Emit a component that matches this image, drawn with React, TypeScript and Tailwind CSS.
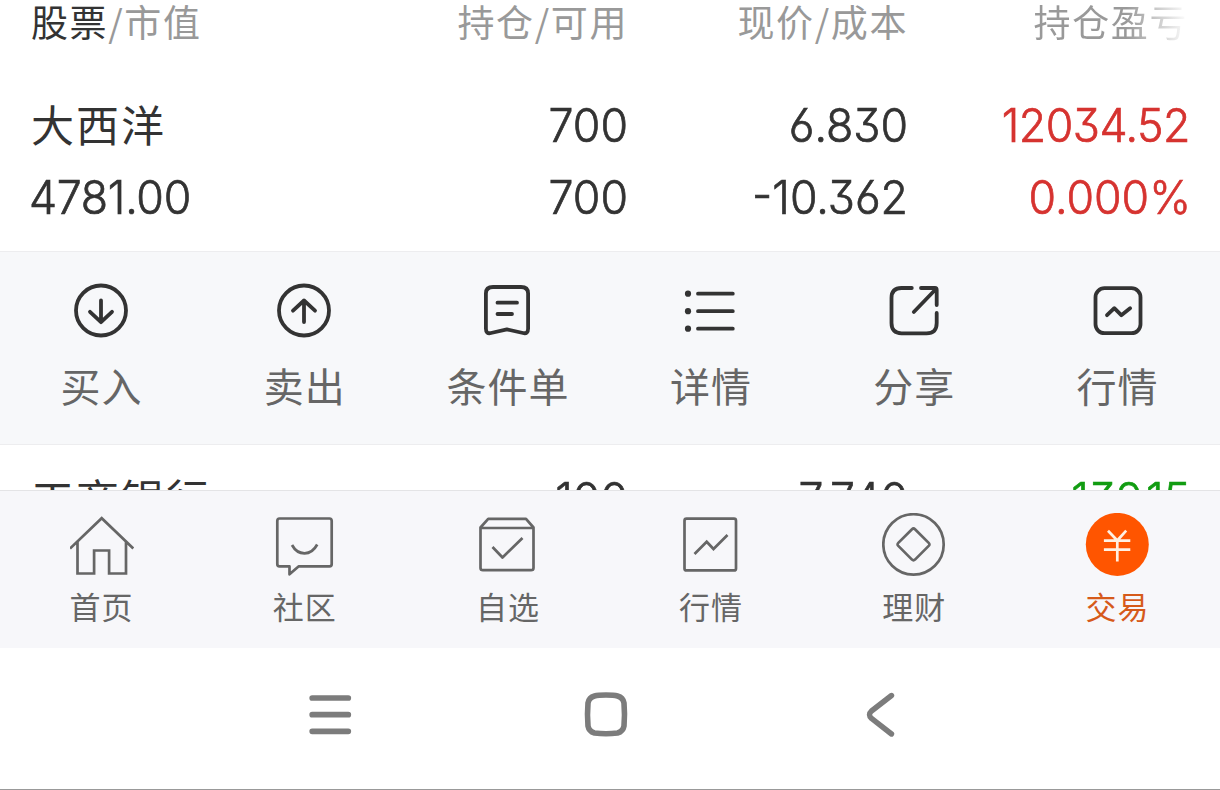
import type { ReactNode } from "react";

const cjk = "font-['Noto_Sans_CJK_SC',sans-serif]";
const digits =
  "font-['Inter','Noto_Sans_CJK_SC',sans-serif] [font-feature-settings:'cv03','cv04','cv09','case']";

function Icon({ children, width }: { children: ReactNode; width: number }) {
  return (
    <svg
      className="block h-16 w-16 shrink-0"
      viewBox="-31.5 -32 64 64"
      fill="none"
      stroke="currentColor"
      strokeWidth={width}
      strokeLinecap="round"
      strokeLinejoin="round"
    >
      {children}
    </svg>
  );
}

const actions: { label: string; icon: ReactNode }[] = [
  {
    label: "买入",
    icon: (
      <>
        <circle cx="-0.5" cy="-0.5" r="25" />
        <path d="M-0.5 -10.5V11M-11.5 0.8L-0.5 11.2L10.5 0.8" />
      </>
    ),
  },
  {
    label: "卖出",
    icon: (
      <>
        <circle cx="-0.5" cy="-0.5" r="25" />
        <path d="M-0.5 11V-10.5M-11.5 -0.3L-0.5 -10.5L10.5 -0.3" />
      </>
    ),
  },
  {
    label: "条件单",
    icon: (
      <path d="M-14.5 -24H13.5Q20.6 -24 20.6 -17.5V17.5Q20.6 23.3 15.5 22L-0.6 18.4L-16.5 22Q-21.6 23.3 -21.6 17.5V-17.5Q-21.6 -24 -14.5 -24ZM-10 -8.3H9.5M-10 3H4.5" />
    ),
  },
  {
    label: "详情",
    icon: (
      <>
        <g fill="currentColor" stroke="none">
          <circle cx="-22.5" cy="-17.3" r="3.1" />
          <circle cx="-22.5" cy="0.2" r="3.1" />
          <circle cx="-22.5" cy="17.7" r="3.1" />
        </g>
        <path d="M-12.5 -17.3H22.3M-12.5 0.2H22.3M-12.5 17.7H22.3" />
      </>
    ),
  },
  {
    label: "分享",
    icon: (
      <path d="M-1.7 -23H-12Q-22 -23 -22 -13V12Q-22 22.3 -12 22.3H13Q23.2 22.3 23.2 12V2M7.5 -23H21.5Q23.2 -23 23.2 -21V-6M21.5 -21L0.3 1" />
    ),
  },
  {
    label: "行情",
    icon: (
      <>
        <rect x="-21" y="-22.8" width="45" height="45" rx="9" />
        <path d="M-9.5 4.2L-2.2 -2.8L4.8 4.2L13.6 -2.8" />
      </>
    ),
  },
];

const tabs: { label: string; icon: ReactNode; active?: boolean }[] = [
  {
    label: "首页",
    icon: (
      <path
        strokeLinecap="butt"
        strokeLinejoin="miter"
        d="M-31.5 3.5L0.2 -26.8L31.8 3.5M-24 -3.5V28.5H-7.4V5.5H7.6V28.5H24.5V-3.5"
      />
    ),
  },
  {
    label: "社区",
    icon: (
      <>
        <path d="M-25 -26.5H25Q27.2 -26.5 27.2 -24V19Q27.2 21.4 25 21.4H-6L-15 29.3V21.4H-25Q-27.2 21.4 -27.2 19V-24Q-27.2 -26.5 -25 -26.5Z" />
        <path strokeLinecap="butt" d="M-12.5 0Q-8 8.3 0 8.3T12.7 -0.5" />
      </>
    ),
  },
  {
    label: "自选",
    icon: (
      <>
        <path d="M-27 -17.5L-19.3 -26.2H18.5L26 -17.5V23Q26 25.2 23.5 25.2H-24.5Q-27 25.2 -27 23ZM-26.5 -17H25.5" />
        <path strokeLinecap="butt" d="M-15 2L-5 12.5L15 -7" />
      </>
    ),
  },
  {
    label: "行情",
    icon: (
      <>
        <rect x="-26" y="-26.3" width="51.5" height="51.7" rx="2" />
        <path strokeLinecap="butt" strokeLinejoin="miter" d="M-16 9L-3.8 -3.2L3 4L17 -10" />
      </>
    ),
  },
  {
    label: "理财",
    icon: (
      <>
        <circle cx="0" cy="-0.6" r="30.2" />
        <path d="M-1.5 -15.8Q0 -17.2 1.5 -15.8L15.2 -2.1Q16.7 -0.6 15.2 0.9L1.5 14.6Q0 16 -1.5 14.6L-15.2 0.9Q-16.7 -0.6 -15.2 -2.1Z" />
      </>
    ),
  },
  {
    label: "交易",
    active: true,
    icon: (
      <>
        <circle cx="0.8" cy="-0.6" r="31.5" fill="#ff5500" stroke="none" />
        <path
          stroke="#fff0e2"
          strokeLinecap="butt"
          d="M-8.5 -14.3L0.8 -4.5L9.7 -14.3M0.8 -4.5V16.6M-12.6 -4.4H13.8M-12.6 4.6H13.8"
        />
      </>
    ),
  },
];

const row = "grid grid-cols-[317px_280px_280px_282px] pl-[31px] whitespace-nowrap";
const figure = "scale-x-[0.95] text-[47px] leading-[72px] font-light [-webkit-text-stroke:0.7px]";
const num = `${figure} origin-right text-right`;

export default function App() {
  return (
    <div className="flex h-[790px] w-[1220px] flex-col overflow-hidden bg-white text-[#333]">
      <div className="h-[251px] shrink-0">
        <div className={`${row} ${cjk} h-[46px] text-[37px] leading-[42px] tracking-[1.6px] text-[#999]`}>
          <div>
            <span className="text-[#333]">股票</span>/市值
          </div>
          <div className="text-right">持仓/可用</div>
          <div className="text-right">现价/成本</div>
          <div className="pr-[2px] text-right">
            <span className="bg-linear-to-r from-[#999] from-60% to-[#fff] to-100% bg-clip-text text-transparent">
              持仓盈亏
            </span>
          </div>
        </div>
        <div className={`${row} ${digits} mt-[43px] h-[72px]`}>
          <div className={`${cjk} text-[43px] leading-[68px] tracking-[2px]`}>大西洋</div>
          <div className={num}>700</div>
          <div className={num}>6.830</div>
          <div className={`${num} tracking-[-0.5px] text-[#d63330]`}>12034.52</div>
        </div>
        <div className={`${row} ${digits} h-[72px]`}>
          <div className={`${figure} -ml-[2px] origin-left tracking-[-0.3px]`}>4781.00</div>
          <div className={num}>700</div>
          <div className={num}>-10.362</div>
          <div className={`${num} -mr-px text-[#d63330]`}>0.000%</div>
        </div>
      </div>

      <div className="grid h-[194px] shrink-0 grid-cols-6 border-y border-[#ededef] bg-[#f7f8fa] pr-px">
        {actions.map((a) => (
          <div key={a.label} className="flex flex-col items-center pt-[27px]">
            <Icon width={3.8}>{a.icon}</Icon>
            <div className={`${cjk} mt-[12px] text-[40px] leading-[60px] tracking-[1px] text-[#666]`}>
              {a.label}
            </div>
          </div>
        ))}
      </div>

      <div className="h-[45px] shrink-0 overflow-hidden">
        <div className={`${row} ${digits} mt-[18px]`}>
          <div className={`${cjk} text-[43px] leading-[68px] tracking-[2px]`}>工商银行</div>
          <div className={num}>100</div>
          <div className={num}>7.740</div>
          <div className={`${num} text-[#119c11]`}>-139.15</div>
        </div>
      </div>

      <nav className="grid h-[158px] shrink-0 grid-cols-6 border-t border-[#e4e4e6] bg-[#f7f7fa] pr-px">
        {tabs.map((t) => (
          <div key={t.label} className="flex flex-col items-center pt-[22px] text-[#666]">
            <Icon width={2.7}>{t.icon}</Icon>
            <div
              className={`${cjk} mt-[6px] text-[31px] leading-[46px] tracking-[1px] ${
                t.active ? "text-[#d65a1a]" : "text-[#666]"
              }`}
            >
              {t.label}
            </div>
          </div>
        ))}
      </nav>

      <div className="flex h-[142px] shrink-0 justify-between border-b border-[#999] pt-[42px] pr-[315px] pl-[306px] text-[#7c7c7c]">
        <svg className="h-12 w-12" viewBox="0 0 48 48" fill="none" stroke="currentColor" strokeWidth="5.7" strokeLinecap="round">
          <path d="M6.2 8H42.3M6.2 24.7H42.3M6.2 41.3H42.3" />
        </svg>
        <svg className="h-12 w-12" viewBox="0 0 48 48" fill="none" stroke="currentColor" strokeWidth="5.6">
          <path d="M24 5Q32 5 35.5 6Q41 7.5 42 13Q43 24.5 42 36Q41 41.5 35.5 43Q24 44.4 12.5 43Q7 41.5 6 36Q5 24.5 6 13Q7 7.5 12.5 6Q16 5 24 5Z" />
        </svg>
        <svg className="h-12 w-12" viewBox="0 0 48 48" fill="none" stroke="currentColor" strokeWidth="5.4" strokeLinecap="round" strokeLinejoin="round">
          <path d="M34.5 5.5L14.5 21Q10.5 24.7 14.5 28.4L34.5 44" />
        </svg>
      </div>
    </div>
  );
}
